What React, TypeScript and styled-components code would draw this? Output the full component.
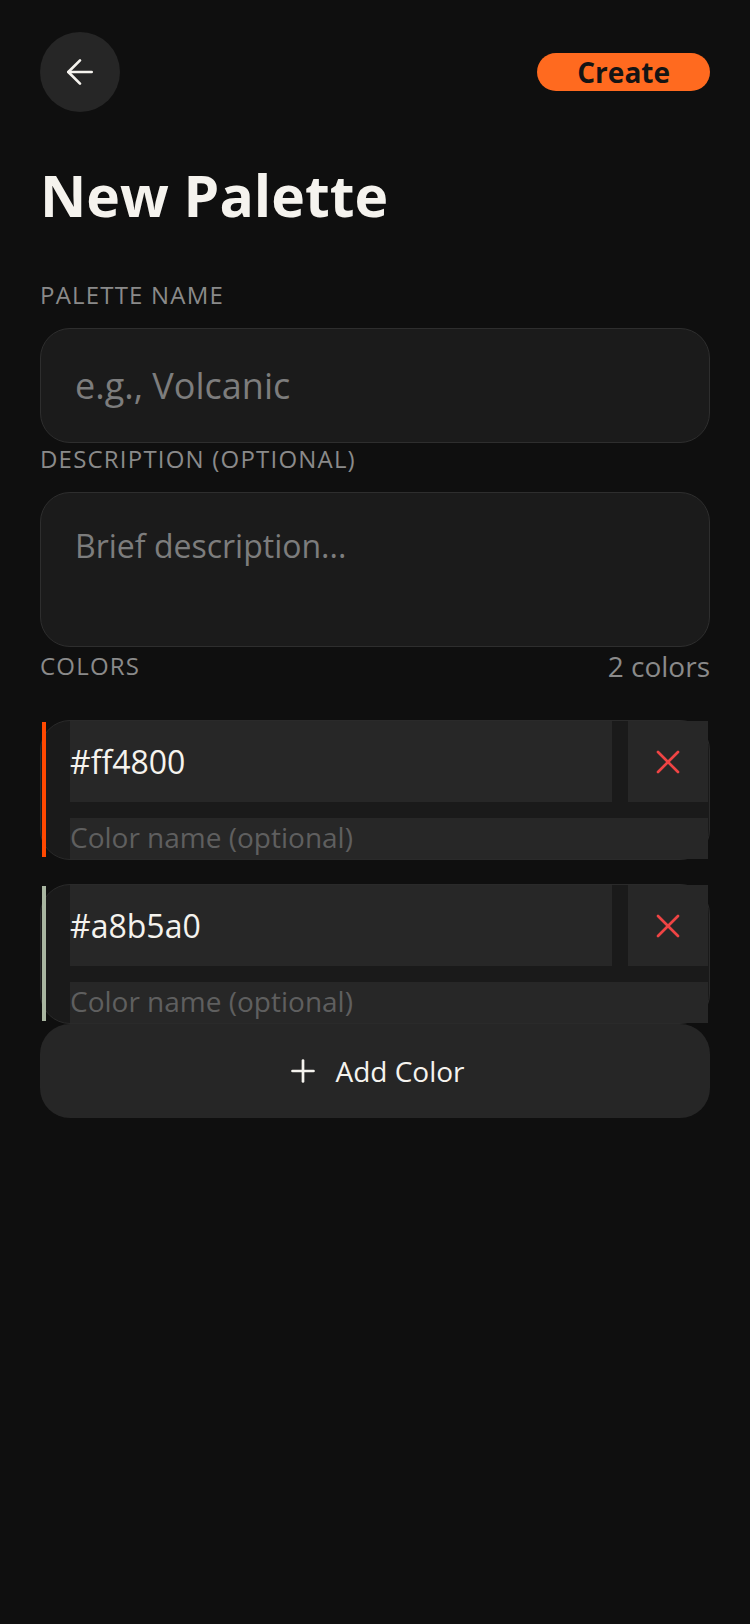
import { FC, useState } from "react";
import styled, { createGlobalStyle } from "styled-components";
import { ArrowLeft, Plus, X } from "lucide-react";

interface IColorEntry {
  id: number;
  hex: string;
  name: string;
}

const GlobalStyle = createGlobalStyle`
  * {
    box-sizing: border-box;
  }
  html, body {
    margin: 0;
    padding: 0;
    background-color: #0f0f0f;
  }
  body {
    font-family: "Open Sans", "Noto Sans", sans-serif;
    color: #f5f3ee;
  }
`;

const App: FC = () => {
  const [name, setName] = useState<string>("");
  const [description, setDescription] = useState<string>("");
  const [colors, setColors] = useState<IColorEntry[]>([
    { id: 1, hex: "#ff4800", name: "" },
    { id: 2, hex: "#a8b5a0", name: "" },
  ]);

  const updateColor = (id: number, field: "hex" | "name", value: string) => {
    setColors(colors.map((c) => (c.id === id ? { ...c, [field]: value } : c)));
  };

  const removeColor = (id: number) => {
    setColors(colors.filter((c) => c.id !== id));
  };

  const addColor = () => {
    setColors([...colors, { id: Date.now(), hex: "#ffffff", name: "" }]);
  };

  return (
    <>
      <GlobalStyle />
      <StyledPage>
        <StyledHeader>
          <StyledBackButton aria-label="Back">
            <ArrowLeft size={40} strokeWidth={1.6} />
          </StyledBackButton>
          <StyledCreateButton>Create</StyledCreateButton>
        </StyledHeader>

        <StyledTitle>New Palette</StyledTitle>

        <StyledLabel>Palette Name</StyledLabel>
        <StyledInput
          placeholder="e.g., Volcanic"
          value={name}
          onChange={(e) => setName(e.currentTarget.value)}
        />

        <StyledLabel>Description (optional)</StyledLabel>
        <StyledTextArea
          placeholder="Brief description..."
          value={description}
          onChange={(e) => setDescription(e.currentTarget.value)}
        />

        <StyledColorsHeader>
          <StyledColorsLabel>Colors</StyledColorsLabel>
          <StyledCount>{colors.length} colors</StyledCount>
        </StyledColorsHeader>

        <StyledColorList>
          {colors.map((color) => (
            <StyledColorRow key={color.id}>
              <StyledStrip $color={color.hex} />
              <StyledRowBody>
                <StyledRowTop>
                  <StyledHexInput
                    value={color.hex}
                    onChange={(e) =>
                      updateColor(color.id, "hex", e.currentTarget.value)
                    }
                  />
                  <StyledDeleteButton
                    aria-label="Remove color"
                    onClick={() => removeColor(color.id)}
                  >
                    <X size={40} strokeWidth={1.6} />
                  </StyledDeleteButton>
                </StyledRowTop>
                <StyledNameInput
                  placeholder="Color name (optional)"
                  value={color.name}
                  onChange={(e) =>
                    updateColor(color.id, "name", e.currentTarget.value)
                  }
                />
              </StyledRowBody>
            </StyledColorRow>
          ))}
        </StyledColorList>

        <StyledAddButton onClick={addColor}>
          <Plus size={36} strokeWidth={1.8} />
          Add Color
        </StyledAddButton>
      </StyledPage>
    </>
  );
};

export default App;

const StyledPage = styled.div`
  display: flex;
  flex-direction: column;
  min-height: 1624px;
  padding: 32px 40px;
  background-color: #0f0f0f;
`;

const StyledHeader = styled.div`
  display: flex;
  align-items: center;
  justify-content: space-between;
`;

const StyledBackButton = styled.button`
  display: flex;
  align-items: center;
  justify-content: center;
  width: 80px;
  height: 80px;
  border-radius: 50%;
  border: none;
  padding: 0;
  background-color: #262626;
  color: #f5f3ee;
  cursor: pointer;
`;

const StyledCreateButton = styled.button`
  height: 38px;
  padding: 0 40px;
  border: none;
  border-radius: 19px;
  background-color: #ff6a1f;
  color: #141414;
  font-family: inherit;
  font-size: 28px;
  font-weight: 700;
  line-height: 38px;
  cursor: pointer;
`;

const StyledTitle = styled.h1`
  margin: 44px 0 45px;
  font-size: 57px;
  font-weight: 700;
  line-height: 78px;
  color: #f5f3ee;
`;

const StyledLabel = styled.label`
  display: block;
  margin-bottom: 17px;
  font-size: 24px;
  line-height: 32px;
  letter-spacing: 1.2px;
  text-transform: uppercase;
  color: #8a8a8a;
`;

const StyledInput = styled.input`
  width: 100%;
  height: 115px;
  padding: 0 34px;
  border: 1.5px solid #2e2e2e;
  border-radius: 30px;
  background-color: #1b1b1b;
  color: #f5f3ee;
  font-family: inherit;
  font-size: 36px;
  outline: none;
  &::placeholder {
    color: #7d7d7d;
  }
`;

const StyledTextArea = styled.textarea`
  display: block;
  width: 100%;
  height: 155px;
  padding: 31px 34px;
  border: 1.5px solid #2e2e2e;
  border-radius: 30px;
  background-color: #1b1b1b;
  color: #f5f3ee;
  font-family: inherit;
  font-size: 32px;
  line-height: 44px;
  resize: none;
  outline: none;
  &::placeholder {
    color: #7d7d7d;
  }
`;

const StyledColorsHeader = styled.div`
  display: flex;
  align-items: center;
  justify-content: space-between;
  margin-bottom: 35px;
`;

const StyledColorsLabel = styled.span`
  font-size: 24px;
  line-height: 32px;
  letter-spacing: 1.2px;
  text-transform: uppercase;
  color: #8a8a8a;
`;

const StyledCount = styled.span`
  font-size: 28px;
  line-height: 38px;
  color: #8a8a8a;
`;

const StyledColorList = styled.div`
  display: flex;
  flex-direction: column;
  gap: 24px;
`;

const StyledColorRow = styled.div`
  display: flex;
  border: 1px solid #2a2a2a;
  border-radius: 30px;
  background-color: #1a1a1a;
`;

const StyledStrip = styled.div<{ $color: string }>`
  flex: 0 0 4px;
  margin: 1px 0 2px 1px;
  background-color: ${(p) => p.$color};
`;

const StyledRowBody = styled.div`
  flex: 1;
  display: flex;
  flex-direction: column;
  gap: 16px;
  margin: 0 1px 0 24px;
`;

const StyledRowTop = styled.div`
  display: flex;
  gap: 16px;
`;

const StyledHexInput = styled.input`
  flex: 1;
  min-width: 0;
  height: 81px;
  padding: 0;
  border: none;
  background-color: #272727;
  color: #f5f3ee;
  font-family: inherit;
  font-size: 32px;
  outline: none;
`;

const StyledDeleteButton = styled.button`
  display: flex;
  align-items: center;
  justify-content: center;
  width: 80px;
  height: 81px;
  padding: 0;
  border: none;
  background-color: #272727;
  color: #ef4444;
  cursor: pointer;
`;

const StyledNameInput = styled.input`
  width: 100%;
  height: 41px;
  padding: 0 0 4px;
  border: none;
  background-color: #272727;
  color: #f5f3ee;
  font-family: inherit;
  font-size: 28px;
  outline: none;
  &::placeholder {
    color: #5f5f5f;
  }
`;

const StyledAddButton = styled.button`
  display: flex;
  align-items: center;
  justify-content: center;
  gap: 14px;
  width: 100%;
  height: 94px;
  border: none;
  border-radius: 30px;
  background-color: #262626;
  color: #f5f3ee;
  font-family: inherit;
  font-size: 28px;
  cursor: pointer;
`;
